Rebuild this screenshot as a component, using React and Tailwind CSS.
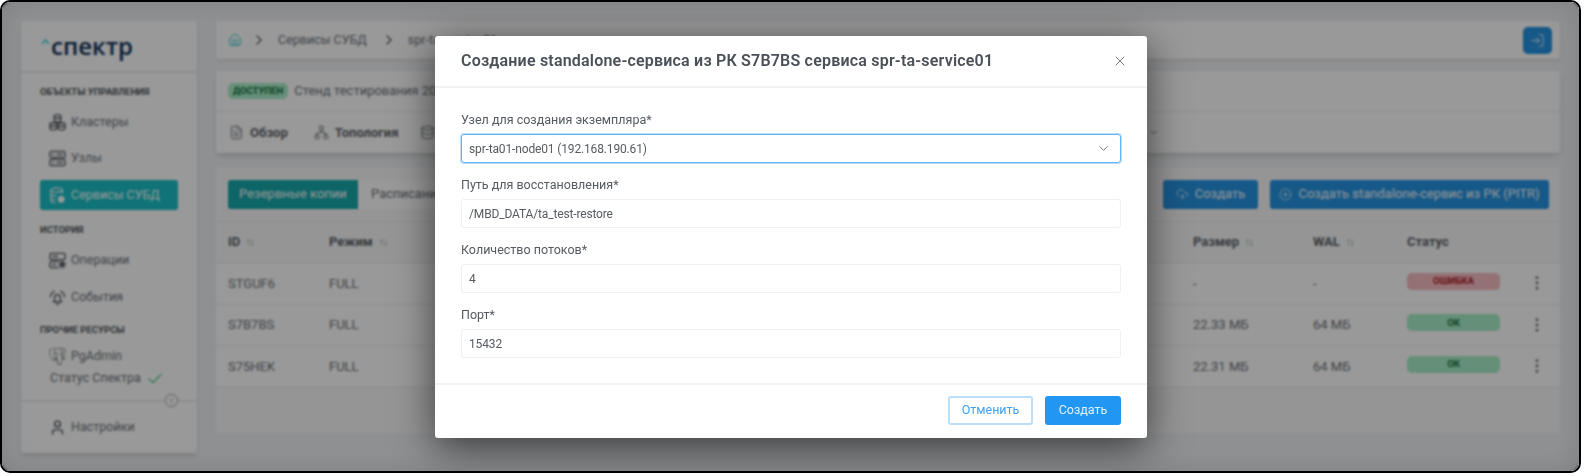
import {
  ArrowUpDown,
  Check,
  ChevronDown,
  ChevronRight,
  CircleChevronLeft,
  CirclePlus,
  CloudUpload,
  Database,
  EllipsisVertical,
  FileText,
  House,
  LogIn,
  Network,
  User,
  X,
} from 'lucide-react';
import { SiPostgresql } from 'react-icons/si';

const rows = [
  { id: 'STGUF6', mode: 'FULL', size: '-', wal: '-', status: 'ОШИБКА', ok: false },
  { id: 'S7B7BS', mode: 'FULL', size: '22.33 МБ', wal: '64 МБ', status: 'ОК', ok: true },
  { id: 'S75HEK', mode: 'FULL', size: '22.31 МБ', wal: '64 МБ', status: 'ОК', ok: true },
];

function ClusterIcon({ className }) {
  return (
    <svg viewBox="0 0 18 18" fill="none" stroke="currentColor" strokeWidth="1.4" className={className}>
      <rect x="5.5" y="1" width="7" height="7.5" rx="1.2" />
      <path d="M5.5 4.5h7" />
      <rect x="1" y="9.5" width="7.5" height="7" rx="1.5" />
      <rect x="9.5" y="9.5" width="7.5" height="7" rx="1.5" />
      <path d="M1 13h7.5M9.5 13H17" />
    </svg>
  );
}

function ServerIcon({ className }) {
  return (
    <svg viewBox="0 0 18 18" fill="none" stroke="currentColor" strokeWidth="1.4" className={className}>
      <rect x="1" y="1.5" width="16" height="6.5" rx="1.5" />
      <rect x="1" y="10" width="16" height="6.5" rx="1.5" />
      <path d="M3.5 4.8h2M8 4.8h6.5M3.5 13.2h2M8 13.2h6.5" />
    </svg>
  );
}

function OperationsIcon({ className }) {
  return (
    <svg viewBox="0 0 18 18" fill="none" stroke="currentColor" strokeWidth="1.4" className={className}>
      <rect x="1" y="1.5" width="16" height="6.5" rx="1.5" />
      <path d="M10 16.5H2.5A1.5 1.5 0 0 1 1 15v-3.5A1.5 1.5 0 0 1 2.5 10H10" />
      <path d="M3.5 4.8h6M3.5 13.2h4" />
      <circle cx="14" cy="13.2" r="2.6" fill="currentColor" stroke="none" />
      <circle cx="14" cy="13.2" r="3.6" strokeDasharray="1.5 1.3" />
    </svg>
  );
}

function EventsIcon({ className }) {
  return (
    <svg viewBox="0 0 18 18" fill="none" stroke="currentColor" strokeWidth="1.4" className={className}>
      <path d="M5 13.5c1-1.2 1-2.6 1-4.5a3 3 0 0 1 6 0c0 1.9 0 3.3 1 4.5z" />
      <path d="M7.5 15.5a1.6 1.6 0 0 0 3 0" />
      <path d="M3.8 3.500C2.400 5 1.600 6.600 1.400 8.600M14.200 3.500c1.400 1.500 2.200 3.100 2.400 5.100" />
      <path d="M6 1.800C5.200 2.300 4.600 3 4.200 3.800M12 1.800c.8.5 1.400 1.200 1.800 2" />
    </svg>
  );
}

function DbServiceIcon({ className }) {
  return (
    <svg viewBox="0 0 18 18" fill="none" stroke="currentColor" strokeWidth="1.3" className={className}>
      <ellipse cx="8" cy="3.2" rx="6" ry="2.2" />
      <path d="M2 3.2v11c0 1.2 2.4 2.2 5 2.2M14 3.2v4M2 7.2c0 1.2 2.6 2.2 6 2.2M2 11.2c0 1.2 2 2 4.5 2.1" />
      <circle cx="13" cy="13" r="3.6" fill="currentColor" stroke="none" />
    </svg>
  );
}

function NavItem({ icon: Icon, label, active }) {
  return (
    <div
      className={`flex h-[30px] items-center gap-[5px] rounded-[3px] pl-[9px] text-[12.5px] ${
        active ? 'bg-[#19c0c6] text-white' : 'text-[#6b7178]'
      }`}
    >
      <Icon className={`h-[17px] w-[17px] shrink-0 ${active ? '' : 'text-[#4f555b]'}`} />
      <span>{label}</span>
    </div>
  );
}

function SectionTitle({ children, className = '' }) {
  return <div className={`text-[9.5px] font-bold text-[#4f555b] ${className}`}>{children}</div>;
}

function Sidebar() {
  return (
    <aside className="flex h-[432px] w-[176px] shrink-0 flex-col rounded-[3px] bg-white shadow-md">
      <div className="flex h-[52px] shrink-0 items-start border-b-2 border-[#e8eaec] pt-[10px] pl-[20px]">
        <svg viewBox="0 0 10 8" className="mt-[7px] h-[7px] w-[9px] text-[#22d8e0]" fill="none" stroke="currentColor" strokeWidth="1.6">
          <path d="M1 7l4-5 4 5" />
        </svg>
        <span className="ml-[1px] font-['Open_Sans',sans-serif] text-[24px] leading-[30px] font-semibold text-[#0f3158]">спектр</span>
      </div>
      <div className="flex flex-1 flex-col px-[19px]">
        <SectionTitle className="mt-[12px]">ОБЪЕКТЫ УПРАВЛЕНИЯ</SectionTitle>
        <div className="mt-[8px]">
          <NavItem icon={ClusterIcon} label="Кластеры" />
        </div>
        <div className="mt-[6px]">
          <NavItem icon={ServerIcon} label="Узлы" />
        </div>
        <div className="mt-[7px]">
          <NavItem icon={DbServiceIcon} label="Сервисы СУБД" active />
        </div>
        <SectionTitle className="mt-[13px]">ИСТОРИЯ</SectionTitle>
        <div className="mt-[8px]">
          <NavItem icon={OperationsIcon} label="Операции" />
        </div>
        <div className="mt-[7px]">
          <NavItem icon={EventsIcon} label="События" />
        </div>
        <SectionTitle className="mt-[10px]">ПРОЧИЕ РЕСУРСЫ</SectionTitle>
        <div className="mt-[5px]">
          <NavItem icon={SiPostgresql} label="PgAdmin" />
        </div>
        <div className="mt-[-6px] flex h-[26px] items-center gap-[5px] pl-[10px] text-[12.5px] text-[#6b7178]">
          Статус Спектра
          <Check className="h-[18px] w-[18px] text-[#4fc98a]" strokeWidth={1.5} />
        </div>
      </div>
      <div className="relative flex h-[53px] shrink-0 items-center border-t-2 border-[#e8eaec] px-[19px]">
        <CircleChevronLeft className="absolute top-[-9px] right-[18px] h-[15px] w-[15px] bg-white text-[#8d9399]" strokeWidth={1.3} />
        <div className="w-full">
          <NavItem icon={User} label="Настройки" />
        </div>
      </div>
    </aside>
  );
}

function Tab({ icon: Icon, label, className = '' }) {
  return (
    <div className={`flex items-center gap-[6px] text-[13px] font-bold text-[#5d6268] ${className}`}>
      <Icon className="h-[15px] w-[15px]" strokeWidth={1.4} />
      {label}
    </div>
  );
}

function SortHead({ label }) {
  return (
    <span className="flex items-center gap-[6px]">
      {label}
      <ArrowUpDown className="h-[9px] w-[9px] text-[#9aa0a6]" strokeWidth={1.5} />
    </span>
  );
}

function BackupsCard() {
  return (
    <section className="mt-[14px] flex h-[266px] flex-col rounded-[3px] bg-[#f8f9fa] text-[13px] text-[#6b7178]">
      <div className="flex h-[55px] shrink-0 items-center border-b border-[#e8eaec] pr-[11px] pl-[12px]">
        <div className="flex h-[29px] w-[130px] items-center justify-center rounded-l-[3px] bg-[#16a8ab] text-[13px] text-white">
          Резервные копии
        </div>
        <div className="flex h-[29px] items-center bg-white px-[13px] text-[13px]">Расписание</div>
        <div className="ml-auto flex h-[29px] w-[95px] items-center justify-center gap-[6px] rounded-[3px] bg-[#2593e2] text-[13px] text-white">
          <CloudUpload className="h-[13px] w-[13px]" strokeWidth={1.4} />
          Создать
        </div>
        <div className="ml-[12px] flex h-[29px] w-[279px] items-center justify-center gap-[6px] rounded-[3px] bg-[#2593e2] text-[13px] text-white">
          <CirclePlus className="h-[13px] w-[13px]" strokeWidth={1.4} />
          Создать standalone-сервис из РК (PITR)
        </div>
      </div>
      <div className="grid h-[41px] shrink-0 grid-cols-[101px_864px_120px_94px_121px_1fr] items-center border-b border-[#e8eaec] pl-[12px] font-bold text-[#5d6268]">
        <SortHead label="ID" />
        <SortHead label="Режим" />
        <SortHead label="Размер" />
        <SortHead label="WAL" />
        <span>Статус</span>
        <span />
      </div>
      {rows.map((row) => (
        <div
          key={row.id}
          className="grid h-[41.5px] shrink-0 grid-cols-[101px_864px_120px_94px_121px_1fr] items-center border-b border-[#e8eaec] bg-white pl-[12px]"
        >
          <span>{row.id}</span>
          <span>{row.mode}</span>
          <span>{row.size}</span>
          <span>{row.wal}</span>
          <span
            className={`flex h-[17px] w-[93px] -translate-y-[2px] items-center justify-center rounded-[5px] text-[9.5px] font-bold ${
              row.ok ? 'bg-[#a9efc8] text-[#0d6b38]' : 'bg-[#f5bcc2] text-[#b01825]'
            }`}
          >
            {row.status}
          </span>
          <EllipsisVertical className="h-[18px] w-[18px]" strokeWidth={1.8} />
        </div>
      ))}
    </section>
  );
}

function Content() {
  return (
    <main className="ml-[19px] flex min-w-0 flex-1 flex-col">
      <div className="flex h-[38px] shrink-0 items-center rounded-[3px] bg-white pr-[8px] pl-[12px] text-[12.5px] text-[#6b7178] shadow-sm">
        <House className="h-[14px] w-[14px] text-[#19c0c6]" strokeWidth={1.6} />
        <ChevronRight className="ml-[9px] h-[16px] w-[16px] text-[#4f555b]" strokeWidth={1.8} />
        <span className="ml-[11px]">Сервисы СУБД</span>
        <ChevronRight className="ml-[14px] h-[16px] w-[16px] text-[#4f555b]" strokeWidth={1.8} />
        <span className="ml-[11px]">spr-ta-service01</span>
        <div className="ml-auto flex h-[27px] w-[29px] items-center justify-center rounded-[5px] bg-[#2593e2] text-white">
          <LogIn className="h-[15px] w-[15px]" strokeWidth={1.4} />
        </div>
      </div>
      <div className="mt-[12px] flex h-[82px] shrink-0 flex-col rounded-[3px] bg-white shadow-md">
        <div className="flex h-[41px] shrink-0 items-center gap-[6px] border-b border-[#e8eaec] pl-[12px] text-[13px] text-[#6b7178]">
          <span className="flex h-[16px] items-center rounded-[5px] bg-[#a9efc8] px-[5px] text-[9.5px] font-bold text-[#0d6b38]">ДОСТУПЕН</span>
          Стенд тестирования 2024
        </div>
        <div className="flex flex-1 items-center gap-[26px] pl-[13px]">
          <Tab icon={FileText} label="Обзор" />
          <Tab icon={Network} label="Топология" />
          <Tab icon={Database} label="Базы данных" className="-ml-[4px]" />
          <ChevronDown className="ml-[598px] h-[11px] w-[11px] text-[#4f555b]" strokeWidth={1.8} />
        </div>
      </div>
      <BackupsCard />
    </main>
  );
}

function Field({ label, value, focused, select }) {
  return (
    <div>
      <div className="mb-[6px] text-[12.5px] leading-[17px] text-[#555b61]">{label}</div>
      <div
        className={`flex h-[29px] items-center justify-between rounded-[3px] border pr-[9px] pl-[7px] text-[12px] tracking-[-0.15px] text-[#555b61] ${
          focused ? 'border-[#64b5f6] shadow-[0_0_0_1px_#bbdefb]' : 'border-[#eef0f2]'
        }`}
      >
        {value}
        {select && <ChevronDown className="h-[15px] w-[15px] text-[#6b7178]" strokeWidth={1.5} />}
      </div>
    </div>
  );
}

function Modal() {
  return (
    <div className="absolute top-[34px] left-[433px] z-20 flex h-[402px] w-[712px] flex-col rounded-[3px] bg-white shadow-[0_10px_40px_rgba(0,0,0,0.6)]">
      <div className="flex h-[52px] shrink-0 items-center justify-between border-b-2 border-[#f0f2f4] pr-[19px] pl-[26px]">
        <h2 className="text-[16px] font-semibold tracking-[0.2px] text-[#4a5057]">
          Создание standalone-сервиса из РК S7B7BS сервиса spr-ta-service01
        </h2>
        <X className="h-[16px] w-[16px] text-[#6b7178]" strokeWidth={1.4} />
      </div>
      <div className="flex flex-1 flex-col gap-[13px] px-[26px] pt-[23px]">
        <Field label="Узел для создания экземпляра*" value="spr-ta01-node01 (192.168.190.61)" focused select />
        <Field label="Путь для восстановления*" value="/MBD_DATA/ta_test-restore" />
        <Field label="Количество потоков*" value="4" />
        <Field label="Порт*" value="15432" />
      </div>
      <div className="flex h-[55px] shrink-0 items-center justify-end gap-[12px] border-t-2 border-[#f0f2f4] pr-[26px] pb-[2px]">
        <button type="button" className="h-[29px] w-[85px] rounded-[3px] border-2 border-[#bbdefb] text-[12.5px] text-[#3fa2f3]">
          Отменить
        </button>
        <button type="button" className="h-[29px] w-[76px] rounded-[3px] bg-[#2196f3] text-[12.5px] text-[#e3f2fd]">
          Создать
        </button>
      </div>
    </div>
  );
}

export default function App() {
  return (
    <div className="h-[476px] w-[1585px] bg-white font-['Roboto',sans-serif]">
      <div className="relative h-[473px] w-[1581px] overflow-hidden rounded-[10px] border-2 border-black bg-[#eff1f3]">
        <div className="flex p-[19px]">
          <Sidebar />
          <Content />
        </div>
        <div className="absolute inset-0 z-10 bg-black/40 shadow-[inset_0_0_30px_rgba(0,0,0,0.12)] backdrop-blur-[1px]" />
        <Modal />
      </div>
    </div>
  );
}
